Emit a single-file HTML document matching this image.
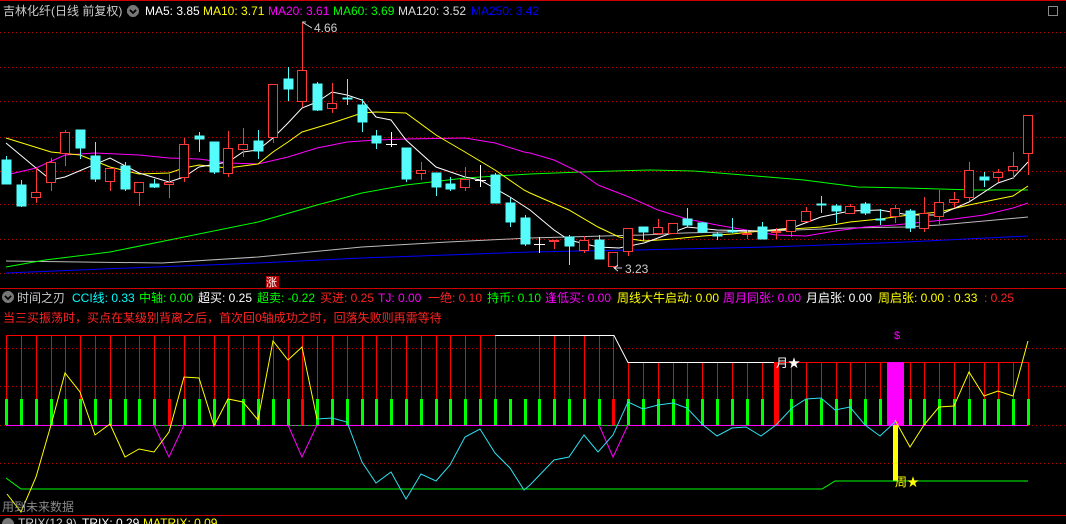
<!DOCTYPE html>
<html><head><meta charset="utf-8"><style>
html,body{margin:0;padding:0;background:#000;width:1066px;height:524px;overflow:hidden}
svg{display:block}
text{font-family:"Liberation Sans","Noto Sans CJK SC",sans-serif;font-size:12px}
</style></head><body>
<svg width="1066" height="524" viewBox="0 0 1066 524" xmlns="http://www.w3.org/2000/svg" shape-rendering="crispEdges">
<rect width="1066" height="524" fill="#000"/>
<line x1="0" y1="0.5" x2="1066" y2="0.5" stroke="#c00"/>
<line x1="0" y1="288.5" x2="1066" y2="288.5" stroke="#c00"/>
<line x1="0" y1="515.5" x2="1066" y2="515.5" stroke="#c00"/>
<g stroke="#b00" stroke-dasharray="1,3">
<line x1="0" y1="32.5" x2="1066" y2="32.5"/><line x1="0" y1="67.5" x2="1066" y2="67.5"/>
<line x1="0" y1="101.5" x2="1066" y2="101.5"/><line x1="0" y1="137.5" x2="1066" y2="137.5"/>
<line x1="0" y1="171.5" x2="1066" y2="171.5"/><line x1="0" y1="204.5" x2="1066" y2="204.5"/>
<line x1="0" y1="239.5" x2="1066" y2="239.5"/><line x1="0" y1="273.5" x2="1066" y2="273.5"/>
<line x1="0" y1="348.5" x2="1066" y2="348.5"/><line x1="0" y1="386.5" x2="1066" y2="386.5"/>
<line x1="0" y1="425.5" x2="1066" y2="425.5"/><line x1="0" y1="463.5" x2="1066" y2="463.5"/>
</g>
<!-- header -->
<text x="3" y="15" fill="#ccc">吉林化纤(日线 前复权)</text>
<circle cx="133" cy="11" r="6" fill="#777"/><path d="M130 10l3 3 3-3" stroke="#000" stroke-width="1.5" fill="none"/>
<text x="145" y="15" fill="#fff">MA5: 3.85</text>
<text x="203" y="15" fill="#ff0">MA10: 3.71</text>
<text x="268" y="15" fill="#f0f">MA20: 3.61</text>
<text x="333" y="15" fill="#0f0">MA60: 3.69</text>
<text x="398" y="15" fill="#ddd">MA120: 3.52</text>
<text x="471" y="15" fill="#00f">MA250: 3.42</text>
<rect x="1048.5" y="6.5" width="9" height="9" fill="none" stroke="#888"/>
<!-- MAs -->
<g fill="none" stroke-width="1" shape-rendering="auto">
<polyline stroke="#00f" points="6,273 103,269 258,263 362,258 530,252 633,250 769,247 906,242 1028,236"/>
<polyline stroke="#bbb" points="6,261 162,263 258,257 362,247 448,242 530,238 643,235 684,233 769,231 848,228 906,227 940,225 1028,217"/>
<polyline stroke="#0f0" points="6,267 45,260 110,252 184,237 258,222 317,205 362,193 406,185 465,178 530,174 581,172 650,170 694,171 756,176 804,180 858,187 906,188 974,190 1028,190"/>
<polyline stroke="#f0f" points="6,175 36,168 65,155 95,153 139,155 169,158 199,159 228,163 258,164 288,157 317,148 347,142 376,140 406,139 465,138 495,143 524,152 530,153 554,160 581,173 598,185 629,197 658,210 687,219 717,225 746,230 776,235 806,236 835,231 865,227 895,225 924,222 954,219 984,215 1013,208 1028,203"/>
<polyline stroke="#ff0" points="6,138 51,152 80,155 110,167 139,174 169,173 184,168 199,165 228,168 258,164 273,152 288,142 302,132 332,123 362,113 376,112 406,113 436,135 465,152 495,170 524,190 530,193 569,210 598,227 619,237 644,241 673,239 703,236 732,234 761,231 792,229 821,227 850,222 880,219 909,215 939,212 969,205 998,199 1013,196 1028,186"/>
<polyline stroke="#fff" points="6,143 36,168 51,180 65,177 110,158 139,173 169,182 184,177 199,167 228,162 243,152 258,150 273,138 288,123 302,108 317,102 332,92 347,95 362,100 376,117 391,120 406,140 436,167 465,177 480,180 510,197 530,210 554,230 569,240 598,247 619,248 644,243 658,238 687,227 717,230 761,231 792,228 821,217 850,211 880,210 909,215 939,215 969,202 998,183 1013,178 1028,162"/>
</g>
<!-- candles -->
<g stroke="#54fcfc" fill="#54fcfc">
<line x1="6.5" y1="156" x2="6.5" y2="184"/><rect x="2" y="160" width="9" height="24"/>
<line x1="21.5" y1="180" x2="21.5" y2="207"/><rect x="17" y="185" width="9" height="21"/>
<line x1="80.5" y1="130" x2="80.5" y2="159"/><rect x="76" y="130" width="9" height="18"/>
<line x1="95.5" y1="142" x2="95.5" y2="182"/><rect x="91" y="156" width="9" height="23"/>
<line x1="125.5" y1="162" x2="125.5" y2="191"/><rect x="121" y="166" width="9" height="23"/>
<line x1="154.5" y1="179" x2="154.5" y2="188"/><rect x="150" y="184" width="9" height="3"/>
<line x1="199.5" y1="132" x2="199.5" y2="152"/><rect x="195" y="136" width="9" height="3"/>
<line x1="214.5" y1="142" x2="214.5" y2="174"/><rect x="210" y="142" width="9" height="30"/>
<line x1="258.5" y1="130" x2="258.5" y2="159"/><rect x="254" y="141" width="9" height="10"/>
<line x1="288.5" y1="67" x2="288.5" y2="101"/><rect x="284" y="79" width="9" height="10"/>
<line x1="317.5" y1="82" x2="317.5" y2="111"/><rect x="313" y="84" width="9" height="26"/>
<line x1="347.5" y1="79" x2="347.5" y2="105"/><rect x="343" y="98" width="9" height="1"/>
<line x1="362.5" y1="99" x2="362.5" y2="132"/><rect x="358" y="105" width="9" height="17"/>
<line x1="376.5" y1="130" x2="376.5" y2="149"/><rect x="372" y="136" width="9" height="7"/>
<line x1="406.5" y1="148" x2="406.5" y2="182"/><rect x="402" y="148" width="9" height="31"/>
<line x1="436.5" y1="173" x2="436.5" y2="196"/><rect x="432" y="173" width="9" height="14"/>
<line x1="450.5" y1="177" x2="450.5" y2="191"/><rect x="446" y="184" width="9" height="5"/>
<line x1="495.5" y1="173" x2="495.5" y2="203"/><rect x="491" y="175" width="9" height="28"/>
<line x1="510.5" y1="198" x2="510.5" y2="227"/><rect x="506" y="203" width="9" height="19"/>
<line x1="525.5" y1="215" x2="525.5" y2="246"/><rect x="521" y="218" width="9" height="26"/>
<line x1="569.5" y1="235" x2="569.5" y2="265"/><rect x="565" y="237" width="9" height="9"/>
<line x1="599.5" y1="235" x2="599.5" y2="259"/><rect x="595" y="240" width="9" height="19"/>
<line x1="643.5" y1="227" x2="643.5" y2="241"/><rect x="639" y="227" width="9" height="5"/>
<line x1="687.5" y1="208" x2="687.5" y2="227"/><rect x="683" y="219" width="9" height="6"/>
<line x1="702.5" y1="222" x2="702.5" y2="233"/><rect x="698" y="223" width="9" height="9"/>
<line x1="717.5" y1="232" x2="717.5" y2="240"/><rect x="713" y="234" width="9" height="2"/>
<line x1="732.5" y1="218" x2="732.5" y2="233"/><rect x="728" y="231" width="9" height="1"/>
<line x1="762.5" y1="222" x2="762.5" y2="239"/><rect x="758" y="227" width="9" height="12"/>
<line x1="821.5" y1="196" x2="821.5" y2="213"/><rect x="817" y="204" width="9" height="1"/>
<line x1="836.5" y1="204" x2="836.5" y2="223"/><rect x="832" y="206" width="9" height="5"/>
<line x1="865.5" y1="202" x2="865.5" y2="215"/><rect x="861" y="204" width="9" height="9"/>
<line x1="880.5" y1="209" x2="880.5" y2="225"/><rect x="876" y="219" width="9" height="1"/>
<line x1="910.5" y1="209" x2="910.5" y2="232"/><rect x="906" y="211" width="9" height="17"/>
<line x1="984.5" y1="172" x2="984.5" y2="187"/><rect x="980" y="177" width="9" height="3"/>
</g>
<g stroke="#fff" fill="#fff">
<line x1="391.5" y1="132" x2="391.5" y2="147"/><line x1="386" y1="144.5" x2="397" y2="144.5"/>
<line x1="480.5" y1="165" x2="480.5" y2="187"/><line x1="475" y1="180.5" x2="486" y2="180.5"/>
<line x1="539.5" y1="237" x2="539.5" y2="253"/><line x1="534" y1="244.5" x2="545" y2="244.5"/>
</g>
<g stroke="#ff3838" fill="#000">
<line x1="36.5" y1="168" x2="36.5" y2="203"/><rect x="31.5" y="192.5" width="9" height="5"/>
<line x1="51.5" y1="158" x2="51.5" y2="191"/><rect x="46.5" y="162.5" width="9" height="20"/>
<line x1="65.5" y1="130" x2="65.5" y2="166"/><rect x="60.5" y="132.5" width="9" height="21"/>
<line x1="110.5" y1="168" x2="110.5" y2="191"/><rect x="105.5" y="168.5" width="9" height="13"/>
<line x1="139.5" y1="182" x2="139.5" y2="206"/><rect x="134.5" y="182.5" width="9" height="10"/>
<line x1="169.5" y1="174" x2="169.5" y2="198"/><rect x="164.5" y="182.5" width="9" height="2"/>
<line x1="184.5" y1="138" x2="184.5" y2="182"/><rect x="179.5" y="144.5" width="9" height="33"/>
<line x1="228.5" y1="131" x2="228.5" y2="177"/><rect x="223.5" y="148.5" width="9" height="25"/>
<line x1="243.5" y1="128" x2="243.5" y2="157"/><rect x="238.5" y="144.5" width="9" height="5"/>
<line x1="273.5" y1="84" x2="273.5" y2="143"/><rect x="268.5" y="84.5" width="9" height="53"/>
<line x1="302.5" y1="23" x2="302.5" y2="107"/><rect x="297.5" y="70.5" width="9" height="31"/>
<line x1="332.5" y1="83" x2="332.5" y2="113"/><rect x="327.5" y="103.5" width="9" height="5"/>
<line x1="421.5" y1="162" x2="421.5" y2="180"/><rect x="416.5" y="170.5" width="9" height="3"/>
<line x1="465.5" y1="167" x2="465.5" y2="191"/><rect x="460.5" y="179.5" width="9" height="8"/>
<line x1="554.5" y1="240" x2="554.5" y2="249"/><rect x="549.5" y="240.5" width="9" height="1"/>
<line x1="584.5" y1="236" x2="584.5" y2="253"/><rect x="579.5" y="240.5" width="9" height="10"/>
<line x1="613.5" y1="252" x2="613.5" y2="268"/><rect x="608.5" y="252.5" width="9" height="14"/>
<line x1="628.5" y1="228" x2="628.5" y2="256"/><rect x="623.5" y="228.5" width="9" height="23"/>
<line x1="658.5" y1="219" x2="658.5" y2="235"/><rect x="653.5" y="227.5" width="9" height="6"/>
<line x1="673.5" y1="223" x2="673.5" y2="233"/><rect x="668.5" y="223.5" width="9" height="10"/>
<line x1="747.5" y1="230" x2="747.5" y2="239"/><rect x="742.5" y="233.5" width="9" height="1"/>
<line x1="776.5" y1="228" x2="776.5" y2="239"/><rect x="771.5" y="231.5" width="9" height="1"/>
<line x1="791.5" y1="220" x2="791.5" y2="237"/><rect x="786.5" y="220.5" width="9" height="11"/>
<line x1="806.5" y1="207" x2="806.5" y2="221"/><rect x="801.5" y="211.5" width="9" height="10"/>
<line x1="850.5" y1="204" x2="850.5" y2="213"/><rect x="845.5" y="206.5" width="9" height="7"/>
<line x1="895.5" y1="205" x2="895.5" y2="223"/><rect x="890.5" y="208.5" width="9" height="8"/>
<line x1="924.5" y1="197" x2="924.5" y2="232"/><rect x="919.5" y="213.5" width="9" height="15"/>
<line x1="939.5" y1="190" x2="939.5" y2="225"/><rect x="934.5" y="202.5" width="9" height="14"/>
<line x1="954.5" y1="192" x2="954.5" y2="208"/><rect x="949.5" y="199.5" width="9" height="3"/>
<line x1="969.5" y1="162" x2="969.5" y2="201"/><rect x="964.5" y="170.5" width="9" height="27"/>
<line x1="998.5" y1="169" x2="998.5" y2="182"/><rect x="993.5" y="172.5" width="9" height="5"/>
<line x1="1013.5" y1="152" x2="1013.5" y2="179"/><rect x="1008.5" y="166.5" width="9" height="4"/>
<line x1="1028.5" y1="115" x2="1028.5" y2="175"/><rect x="1023.5" y="115.5" width="9" height="38"/>
</g>
<path d="M302 22h4M302 22l10 6" stroke="#ccc" fill="none"/>
<text x="314" y="32" fill="#ccc">4.66</text>
<path d="M614 268l8 0M614 268l4-3M614 268l4 3" stroke="#ccc" fill="none"/>
<text x="625" y="273" fill="#ccc">3.23</text>
<rect x="266" y="276" width="13" height="12" fill="#a00"/>
<text x="266" y="286" fill="#fff" style="font-size:11px">涨</text>
<!-- indicator header -->
<circle cx="8" cy="297" r="6" fill="#777"/><path d="M5 296l3 3 3-3" stroke="#000" stroke-width="1.5" fill="none"/>
<g style="font-size:12px">
<text x="17" y="302" fill="#ccc">时间之刃</text>
<text x="72" y="302" fill="#0ff">CCI线: 0.33</text>
<text x="139" y="302" fill="#0f0">中轴: 0.00</text>
<text x="198" y="302" fill="#fff">超买: 0.25</text>
<text x="257" y="302" fill="#0f0">超卖: -0.22</text>
<text x="320" y="302" fill="#f22">买进: 0.25</text>
<text x="378" y="302" fill="#f0f">TJ: 0.00</text>
<text x="428" y="302" fill="#f22">一绝: 0.10</text>
<text x="487" y="302" fill="#0f0">持币: 0.10</text>
<text x="545" y="302" fill="#f0f">逢低买: 0.00</text>
<text x="617" y="302" fill="#ff0">周线大牛启动: 0.00</text>
<text x="723" y="302" fill="#f0f">周月同张: 0.00</text>
<text x="806" y="302" fill="#fff">月启张: 0.00</text>
<text x="878" y="302" fill="#ff0">周启张: 0.00 : 0.33</text>
<text x="984" y="302" fill="#f22">: 0.25</text>
<text x="3" y="322" fill="#f22">当三买振荡时，买点在某级别背离之后，首次回0轴成功之时，回落失败则再需等待</text>
</g>
<!-- indicator -->
<line x1="6" y1="425.5" x2="1028" y2="425.5" stroke="#f0f"/>
<g stroke="#f00">
<line x1="6" y1="335.5" x2="495" y2="335.5"/>
<line x1="775" y1="362.5" x2="1028" y2="362.5"/>
<path d="M6.5 335V425M21.5 335V425M36.5 335V425M51.5 335V425M65.5 335V425M80.5 335V425M95.5 335V425M110.5 335V425M125.5 335V425M139.5 335V425M154.5 335V425M169.5 335V425M184.5 335V425M199.5 335V425M214.5 335V425M228.5 335V425M243.5 335V425M258.5 335V425M273.5 335V425M288.5 335V425M302.5 335V425M317.5 335V425M332.5 335V425M347.5 335V425M362.5 335V425M376.5 335V425M391.5 335V425M406.5 335V425M421.5 335V425M436.5 335V425M450.5 335V425M465.5 335V425M480.5 335V425M495.5 335V425M539.5 335V425M554.5 335V425M569.5 335V425M584.5 335V425M599.5 335V425M613.5 335V425M628.5 362V425M643.5 362V425M658.5 362V425M673.5 362V425M687.5 362V425M702.5 362V425M717.5 362V425M732.5 362V425M747.5 362V425M762.5 362V425M791.5 362V425M806.5 362V425M821.5 362V425M836.5 362V425M850.5 362V425M865.5 362V425M880.5 362V425M910.5 362V425M924.5 362V425M939.5 362V425M954.5 362V425M969.5 362V425M984.5 362V425M998.5 362V425M1013.5 362V425M1028.5 362V425"/>
</g>
<polyline points="495,335.5 614,335.5 628,362.5 775,362.5" stroke="#fff" fill="none" shape-rendering="auto"/>
<g fill="#0f0">
<rect x="5" y="399" width="3" height="26"/><rect x="20" y="399" width="3" height="26"/><rect x="35" y="399" width="3" height="26"/><rect x="50" y="399" width="3" height="26"/><rect x="64" y="399" width="3" height="26"/><rect x="79" y="399" width="3" height="26"/><rect x="94" y="399" width="3" height="26"/><rect x="109" y="399" width="3" height="26"/><rect x="124" y="399" width="3" height="26"/><rect x="138" y="399" width="3" height="26"/><rect x="153" y="399" width="3" height="26"/><rect x="183" y="399" width="3" height="26"/><rect x="198" y="399" width="3" height="26"/><rect x="213" y="399" width="3" height="26"/><rect x="227" y="399" width="3" height="26"/><rect x="242" y="399" width="3" height="26"/><rect x="257" y="399" width="3" height="26"/><rect x="272" y="399" width="3" height="26"/><rect x="287" y="399" width="3" height="26"/><rect x="316" y="399" width="3" height="26"/><rect x="331" y="399" width="3" height="26"/><rect x="346" y="399" width="3" height="26"/><rect x="361" y="399" width="3" height="26"/><rect x="375" y="399" width="3" height="26"/><rect x="390" y="399" width="3" height="26"/><rect x="405" y="399" width="3" height="26"/><rect x="420" y="399" width="3" height="26"/><rect x="435" y="399" width="3" height="26"/><rect x="449" y="399" width="3" height="26"/><rect x="464" y="399" width="3" height="26"/><rect x="479" y="399" width="3" height="26"/><rect x="494" y="399" width="3" height="26"/><rect x="509" y="399" width="3" height="26"/><rect x="524" y="399" width="3" height="26"/><rect x="538" y="399" width="3" height="26"/><rect x="553" y="399" width="3" height="26"/><rect x="568" y="399" width="3" height="26"/><rect x="583" y="399" width="3" height="26"/><rect x="598" y="399" width="3" height="26"/><rect x="627" y="399" width="3" height="26"/><rect x="642" y="399" width="3" height="26"/><rect x="657" y="399" width="3" height="26"/><rect x="672" y="399" width="3" height="26"/><rect x="686" y="399" width="3" height="26"/><rect x="701" y="399" width="3" height="26"/><rect x="716" y="399" width="3" height="26"/><rect x="731" y="399" width="3" height="26"/><rect x="746" y="399" width="3" height="26"/><rect x="761" y="399" width="3" height="26"/><rect x="790" y="399" width="3" height="26"/><rect x="805" y="399" width="3" height="26"/><rect x="820" y="399" width="3" height="26"/><rect x="835" y="399" width="3" height="26"/><rect x="849" y="399" width="3" height="26"/><rect x="864" y="399" width="3" height="26"/><rect x="879" y="399" width="3" height="26"/><rect x="909" y="399" width="3" height="26"/><rect x="923" y="399" width="3" height="26"/><rect x="938" y="399" width="3" height="26"/><rect x="953" y="399" width="3" height="26"/><rect x="968" y="399" width="3" height="26"/><rect x="983" y="399" width="3" height="26"/><rect x="997" y="399" width="3" height="26"/><rect x="1012" y="399" width="3" height="26"/><rect x="1027" y="399" width="3" height="26"/>
</g>
<g fill="#f00"><rect x="168" y="399" width="3" height="26"/><rect x="301" y="399" width="3" height="26"/><rect x="612" y="399" width="3" height="26"/><rect x="774" y="362" width="5" height="63"/></g>
<g stroke="#0c0" stroke-dasharray="3,2"><line x1="154" y1="425.5" x2="184" y2="425.5"/><line x1="288" y1="425.5" x2="317" y2="425.5"/><line x1="599" y1="425.5" x2="628" y2="425.5"/></g>
<rect x="887" y="362" width="17" height="63" fill="#f0f"/>
<rect x="893" y="425" width="5" height="56" fill="#ff0"/>
<g fill="none" shape-rendering="auto">
<polyline stroke="#0f0" points="6,478 21,489 822,489 835,481 1028,481"/>
<polyline stroke="#f0f" points="154,425 169,457 184,425"/>
<polyline stroke="#f0f" points="288,425 302,457 317,425"/>
<polyline stroke="#f0f" points="599,425 613,457 628,425"/>
<polyline stroke="#ff0" points="7,494 21,512 36,477 51,425 65,373 80,392 95,435 110,424 125,457 139,449 154,452 169,432 184,377 199,378 214,426 228,399 243,402 258,420 273,341 288,360 302,347 317,419"/>
<polyline stroke="#2de0f0" points="317,419 332,418 347,422 362,462 376,483 391,472 406,499 421,474 436,481 450,465 465,437 480,429 495,453 510,468 524,490 530,485 554,460 569,457 584,435 598,452 613,435 628,402 643,409 658,405 673,403 687,408 703,425 717,436 732,428 746,427 761,436 776,425 792,408 806,399 821,398 835,410 850,407 865,425 880,436 895,422"/>
<polyline stroke="#ff0" points="895,420 910,447 924,425 939,407 954,406 969,372 984,396 998,391 1013,396 1028,341"/>
</g>
<text x="776" y="367" fill="#fff">月★</text>
<text x="895" y="486" fill="#ff0">周★</text>
<text x="894" y="339" fill="#f0f" style="font-size:11px">$</text>
<text x="2" y="511" fill="#888">用到未来数据</text>
<circle cx="8" cy="524" r="6" fill="#777"/>
<text x="18" y="527" fill="#ccc">TRIX(12,9)</text>
<text x="82" y="527" fill="#fff">TRIX: 0.29</text>
<text x="143" y="527" fill="#ff0">MATRIX: 0.09</text>
</svg>
</body></html>
